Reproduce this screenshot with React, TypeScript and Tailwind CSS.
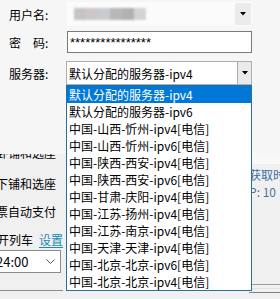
const servers = [
  "默认分配的服务器-ipv4",
  "默认分配的服务器-ipv6",
  "中国-山西-忻州-ipv4[电信]",
  "中国-山西-忻州-ipv6[电信]",
  "中国-陕西-西安-ipv4[电信]",
  "中国-陕西-西安-ipv6[电信]",
  "中国-甘肃-庆阳-ipv4[电信]",
  "中国-江苏-扬州-ipv4[电信]",
  "中国-江苏-南京-ipv4[电信]",
  "中国-天津-天津-ipv4[电信]",
  "中国-北京-北京-ipv6[电信]",
  "中国-北京-北京-ipv4[电信]",
];

const blurred = ["#c4c4c4", "#cdc7c6", "#c8ccd0", "#b8b8b8", "#b3b1af", "#d3d3d3"];

function Caret() {
  return (
    <svg width="6" height="4" viewBox="0 0 6 4" aria-hidden>
      <path d="M0 0h6L3 3.5z" fill="#000" />
    </svg>
  );
}

export default function App() {
  return (
    <div className="relative h-[299px] w-[280px] overflow-hidden bg-[#f0f0f0] font-['Noto_Sans_CJK_SC',sans-serif] text-[12px] leading-[17px] text-black">
      {/* login dialog */}
      <div className="relative z-10 flex h-[154px] flex-col bg-[#f6f6f6] pt-[2px]">
        <div className="flex h-[24px] items-center">
          <span className="w-[67px] pl-[9px]">用户名:</span>
          <div className="flex h-[24px] w-[185px] items-center bg-[#fbfbfb] p-px">
            <div className="flex flex-1 pl-[6px] blur-[1.2px]">
              {blurred.map((c) => (
                <span key={c} className="h-[12px] w-[12px]" style={{ background: c }} />
              ))}
            </div>
            <span className="flex h-full w-[16px] items-center justify-center bg-[#ebebeb]">
              <Caret />
            </span>
          </div>
        </div>
        <div className="mt-[5px] flex h-[22px] items-center">
          <span className="w-[67px] pl-[9px]">密　码:</span>
          <div className="flex h-[22px] w-[185px] items-center border border-[#7a7a7a] bg-white pl-[2px] font-['Liberation_Sans',sans-serif] text-[13px]">
            ****************
          </div>
        </div>
        <div className="mt-[8px] flex h-[24px] items-center">
          <span className="w-[66px] pl-[9px]">服务器:</span>
          <div className="flex h-[24px] w-[186px] items-center border border-[#adadad] bg-white">
            <span className="flex-1 pl-[2px]">默认分配的服务器-ipv4</span>
            <span className="flex h-full w-[14px] items-center justify-center border-l border-[#adadad] bg-[#eaeaea]">
              <Caret />
            </span>
          </div>
        </div>
      </div>

      {/* main window behind */}
      <div className="flex h-[145px]">
        <div className="flex w-[66px] flex-col">
          <div className="-ml-[4px] -mt-[16px] h-[31px] whitespace-nowrap pt-[6px]">卧铺和选座</div>
          <div className="-ml-[4px] flex h-[28px] items-center whitespace-nowrap">下铺和选座</div>
          <div className="-ml-[4px] flex h-[28px] items-center whitespace-nowrap">票自动支付</div>
          <div className="-ml-[3px] flex h-[28px] items-center gap-[6px] whitespace-nowrap">
            <span>开列车</span>
            <span className="text-[#1a8ab5] underline underline-offset-2">设置</span>
          </div>
          <div className="-mt-[3px] flex h-[23px] w-[61px] items-center justify-between border border-l-0 border-[#8a8a8a] bg-white pr-[5px] text-[13px]">
            <span className="-ml-[4px]">24:00</span>
            <svg width="9" height="6" viewBox="0 0 9 6" aria-hidden>
              <path d="M0.5 0.5l4 4 4-4" fill="none" stroke="#555" strokeWidth="1" />
            </svg>
          </div>
          <div className="mt-auto mb-[8px] h-px w-full bg-[#8c8c8c]" />
        </div>
        <div className="ml-[186px] flex flex-1 flex-col">
          <div className="h-[10px] bg-[#f8f8f8]" />
          <div className="mt-[2px] whitespace-nowrap text-[#3a6ea5]">获取时间</div>
          <div className="whitespace-nowrap text-[#4d7296]">P: 10</div>
          <div className="mt-auto h-px bg-[#9a9a9a]" />
          <div className="mt-[3px] h-px bg-[#e2e2e2]" />
          <div className="mb-[6px] mt-[3px] h-px bg-[#808080]" />
        </div>
      </div>

      {/* open dropdown list */}
      <ul className="absolute left-[66px] top-[85px] z-20 w-[186px] border border-[#26709f] bg-white">
        {servers.map((s, i) => (
          <li
            key={s}
            className={`h-[17px] whitespace-nowrap pl-[2px] ${i === 0 ? "bg-[#0078d7] text-white" : ""}`}
          >
            {s}
          </li>
        ))}
      </ul>
    </div>
  );
}
